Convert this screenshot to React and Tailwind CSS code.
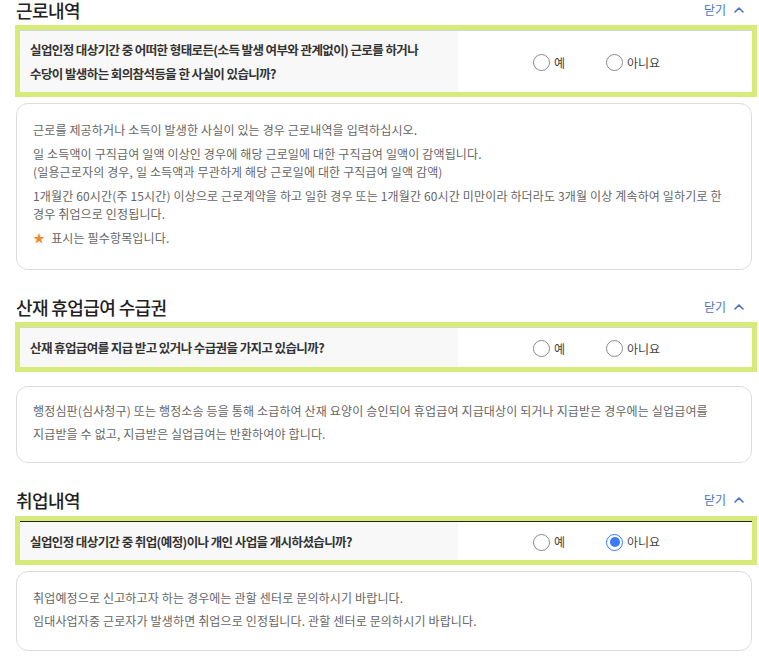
import React from 'react';
import { ChevronUp } from 'lucide-react';

const Radio = ({ label, checked }) => (
  <label className="flex items-center gap-[4px] text-[12px] text-[#444]">
    {checked ? (
      <span className="flex items-center justify-center w-[17px] h-[17px] rounded-full border-[1.5px] border-[#3b7bf6] bg-white">
        <span className="w-[10px] h-[10px] rounded-full bg-[#3b7bf6]" />
      </span>
    ) : (
      <span className="w-[17px] h-[17px] rounded-full border border-[#8a8a8a] bg-white" />
    )}
    <span>{label}</span>
  </label>
);

const Section = ({ title, className, titleGap, question, topLine, qPad, answer, infoGap, infoPad, children }) => (
  <section className={className}>
    <div className="flex justify-between items-center h-[24px] pr-[12px]">
      <h2 className="text-[18px] font-medium text-[#222] tracking-[-0.6px] leading-[24px]">{title}</h2>
      <button className="flex items-center gap-[5px] text-[12px] text-[#4a72c4]">
        닫기
        <ChevronUp className="w-[16px] h-[16px]" strokeWidth={2.4} />
      </button>
    </div>

    {/* highlighted question row */}
    <div className={`${titleGap} -ml-px w-[742px] border-[5px] border-[#d6eb79]`}>
      <div className={`flex border-t ${topLine}`}>
        <div className={`w-[438px] bg-[#f8f8f8] px-[10px] ${qPad} text-[12.5px] font-bold text-[#333] leading-[24px] tracking-[-0.6px] whitespace-nowrap`}>
          {question}
        </div>
        <div className="flex-1 flex items-center pl-[75px] pt-[2px]">
          <div className="w-[73px]">
            <Radio label="예" checked={answer === 'yes'} />
          </div>
          <Radio label="아니요" checked={answer === 'no'} />
        </div>
      </div>
    </div>

    {/* guide box */}
    <div className={`${infoGap} w-[736px] rounded-[12px] border border-[#dcdcdc] px-4 ${infoPad} text-[12px] text-[#666] tracking-[0.15px]`}>
      {children}
    </div>
  </section>
);

export default function App() {
  return (
    <div
      className="w-[759px] h-[659px] overflow-hidden bg-white pl-4"
      style={{ fontFamily: '"Noto Sans CJK KR", "Noto Sans", sans-serif' }}
    >
      <Section
        className="-mt-[2px]"
        title="근로내역"
        titleGap="mt-[3px]"
        topLine="border-[#d4d4d4]"
        qPad="pt-[7px] pb-[6px]"
        question={
          <>
            실업인정 대상기간 중 어떠한 형태로든(소득 발생 여부와 관계없이) 근로를 하거나
            <br />
            수당이 발생하는 회의참석등을 한 사실이 있습니까?
          </>
        }
        infoGap="mt-[6px]"
        infoPad="pt-[17px] pb-[22px]"
      >
        <div className="leading-[18px] flex flex-col gap-[6px]">
          <p>근로를 제공하거나 소득이 발생한 사실이 있는 경우 근로내역을 입력하십시오.</p>
          <p>
            일 소득액이 구직급여 일액 이상인 경우에 해당 근로일에 대한 구직급여 일액이 감액됩니다.
            <br />
            (일용근로자의 경우, 일 소득액과 무관하게 해당 근로일에 대한 구직급여 일액 감액)
          </p>
          <p>
            1개월간 60시간(주 15시간) 이상으로 근로계약을 하고 일한 경우 또는 1개월간 60시간 미만이라 하더라도 3개월 이상 계속하여 일하기로 한
            <br />
            경우 취업으로 인정됩니다.
          </p>
          <p>
            <span className="text-[#f08a2c] mr-[6px]">★</span>표시는 필수항목입니다.
          </p>
        </div>
      </Section>

      <Section
        className="mt-[25px]"
        title="산재 휴업급여 수급권"
        titleGap="mt-[3px]"
        topLine="border-[#d4d4d4]"
        qPad="pt-[8px] pb-[7px]"
        question="산재 휴업급여를 지급 받고 있거나 수급권을 가지고 있습니까?"
        infoGap="mt-[14px]"
        infoPad="pt-[12px] pb-[17px]"
      >
        <p className="leading-[23px]">
          행정심판(심사청구) 또는 행정소송 등을 통해 소급하여 산재 요양이 승인되어 휴업급여 지급대상이 되거나 지급받은 경우에는 실업급여를
          <br />
          지급받을 수 없고, 지급받은 실업급여는 반환하여야 합니다.
        </p>
      </Section>

      <Section
        className="mt-[25px]"
        title="취업내역"
        titleGap="mt-[4px]"
        topLine="border-[#222]"
        qPad="pt-[8px] pb-[6px]"
        question="실업인정 대상기간 중 취업(예정)이나 개인 사업을 개시하셨습니까?"
        answer="no"
        infoGap="mt-[6px]"
        infoPad="pt-[14px] pb-[18px]"
      >
        <div className="leading-[23px]">
          <p>취업예정으로 신고하고자 하는 경우에는 관할 센터로 문의하시기 바랍니다.</p>
          <p>임대사업자중 근로자가 발생하면 취업으로 인정됩니다. 관할 센터로 문의하시기 바랍니다.</p>
        </div>
      </Section>
    </div>
  );
}
